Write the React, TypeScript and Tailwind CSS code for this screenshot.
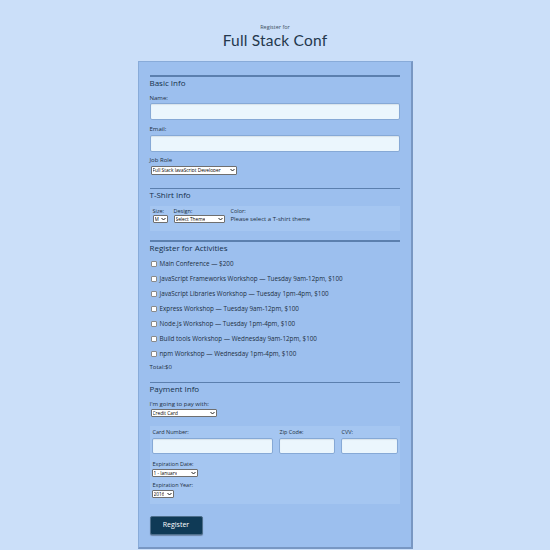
import React from 'react';

const activities = [
  'Main Conference — $200',
  'JavaScript Frameworks Workshop — Tuesday 9am-12pm, $100',
  'JavaScript Libraries Workshop — Tuesday 1pm-4pm, $100',
  'Express Workshop — Tuesday 9am-12pm, $100',
  'Node.js Workshop — Tuesday 1pm-4pm, $100',
  'Build tools Workshop — Wednesday 9am-12pm, $100',
  'npm Workshop — Wednesday 1pm-4pm, $100',
];

function Select({ label, width, h = 'h-[8px]' }: { label: string; width: string; h?: string }) {
  return (
    <div className={`flex items-center justify-between bg-white border border-[#6f6f6f] rounded-[1px] px-[1px] ${h} ${width}`}>
      <span className="text-[4.8px] leading-none text-black truncate">{label}</span>
      <svg width="5" height="4" viewBox="0 0 10 8" className="shrink-0">
        <path d="M1 2 L5 6 L9 2" fill="none" stroke="#222" strokeWidth="2" />
      </svg>
    </div>
  );
}

function Input({ h = 'h-[17px]' }: { h?: string }) {
  return <div className={`w-full bg-[#ebf6fd] border border-[#86a9d6] rounded-[2px] shadow-[inset_0_1px_1px_rgba(0,0,0,0.08)] ${h}`} />;
}

function SectionTitle({ children }: { children: React.ReactNode }) {
  return (
    <div>
      <div className="h-[1.5px] bg-[#5b7fae]" />
      <h2 className="mt-[1px] text-[8px] leading-[10px] text-[#15304a]">{children}</h2>
    </div>
  );
}

export default function App() {
  return (
    <div className="w-[550px] h-[550px] overflow-hidden bg-[#cbdff9] text-[#1c2f42] font-['Open_Sans',sans-serif]">
      {/* Header */}
      <header className="pt-[24px] flex flex-col items-center gap-[2px]">
        <p className="text-[5.5px] leading-[6px] text-[#3d4f60]">Register for</p>
        <h1 className="font-['Lato',sans-serif] text-[15.5px] leading-[16px] tracking-[0.2px] text-[#24384d]">Full Stack Conf</h1>
      </header>

      {/* Form */}
      <form className="mt-[13px] mx-auto w-[275px] h-[488px] bg-[#9cbfee] border-l border-t border-[#88abd9] border-r-2 border-b-2 border-r-[#7897c3] border-b-[#7897c3] px-[11px] pt-[13px]">
        {/* Basic Info */}
        <SectionTitle>Basic Info</SectionTitle>
        <label className="block mt-[6px] text-[6px] leading-[8px]">Name:</label>
        <div className="mt-[1px]"><Input /></div>
        <label className="block mt-[5px] text-[6px] leading-[8px]">Email:</label>
        <div className="mt-[2px]"><Input /></div>
        <label className="block mt-[4px] text-[6px] leading-[8px]">Job Role</label>
        <div className="mt-[2px] ml-[1px]"><Select label="Full Stack JavaScript Developer" width="w-[86px]" h="h-[9px]" /></div>

        {/* T-Shirt */}
        <div className="mt-[13px]">
          <SectionTitle>T-Shirt Info</SectionTitle>
        </div>
        <div className="mt-[6px] h-[25px] bg-[#a5c6f1] flex gap-[6px] px-[3px] pt-[2px]">
          <div>
            <p className="text-[5.5px] leading-[7px]">Size:</p>
            <Select label="M" width="w-[15px]" />
          </div>
          <div>
            <p className="text-[5.5px] leading-[7px]">Design:</p>
            <Select label="Select Theme" width="w-[51px]" />
          </div>
          <div>
            <p className="text-[5.5px] leading-[7px]">Color:</p>
            <p className="text-[6px] leading-[8px]">Please select a T-shirt theme</p>
          </div>
        </div>

        {/* Activities */}
        <div className="mt-[9px]">
          <SectionTitle>Register for Activities</SectionTitle>
        </div>
        <ul className="mt-[7px] flex flex-col gap-[7px]">
          {activities.map((a) => (
            <li key={a} className="flex items-center h-[8px]">
              <span className="ml-[1px] w-[6px] h-[6px] bg-white border border-[#8a8a8a] rounded-[1px]" />
              <span className="ml-[3px] text-[6.3px] leading-[8px]">{a}</span>
            </li>
          ))}
        </ul>
        <p className="mt-[5px] text-[6px] leading-[8px]">Total:$0</p>

        {/* Payment */}
        <div className="mt-[11px]">
          <SectionTitle>Payment Info</SectionTitle>
        </div>
        <label className="block mt-[6px] text-[6px] leading-[8px]">I'm going to pay with:</label>
        <div className="mt-[1px] ml-[1px]"><Select label="Credit Card" width="w-[66px]" /></div>

        <div className="mt-[9px] h-[78px] bg-[#a5c6f1] px-[2px] pt-[3px]">
          <div className="flex gap-[6px]">
            <div className="w-[121px]">
              <p className="ml-[1px] text-[5.5px] leading-[7px]">Card Number:</p>
              <div className="mt-[2px]"><Input h="h-[16px]" /></div>
            </div>
            <div className="w-[56px]">
              <p className="ml-[1px] text-[5.5px] leading-[7px]">Zip Code:</p>
              <div className="mt-[2px]"><Input h="h-[16px]" /></div>
            </div>
            <div className="w-[57px]">
              <p className="ml-[1px] text-[5.5px] leading-[7px]">CVV:</p>
              <div className="mt-[2px]"><Input h="h-[16px]" /></div>
            </div>
          </div>
          <p className="mt-[7px] ml-[1px] text-[5.5px] leading-[7px]">Expiration Date:</p>
          <div className="mt-[1px]"><Select label="1 - January" width="w-[46px]" /></div>
          <p className="mt-[5px] ml-[1px] text-[5.5px] leading-[7px]">Expiration Year:</p>
          <div className="mt-[1px]"><Select label="2016" width="w-[22px]" /></div>
        </div>

        <button
          type="button"
          className="mt-[12px] w-[53px] h-[19px] bg-[#0f3a56] border border-[#4e6f8c] rounded-[2px] text-white text-[7px] shadow-[0_1px_1px_rgba(0,0,0,0.3)]"
        >
          Register
        </button>
      </form>
    </div>
  );
}
